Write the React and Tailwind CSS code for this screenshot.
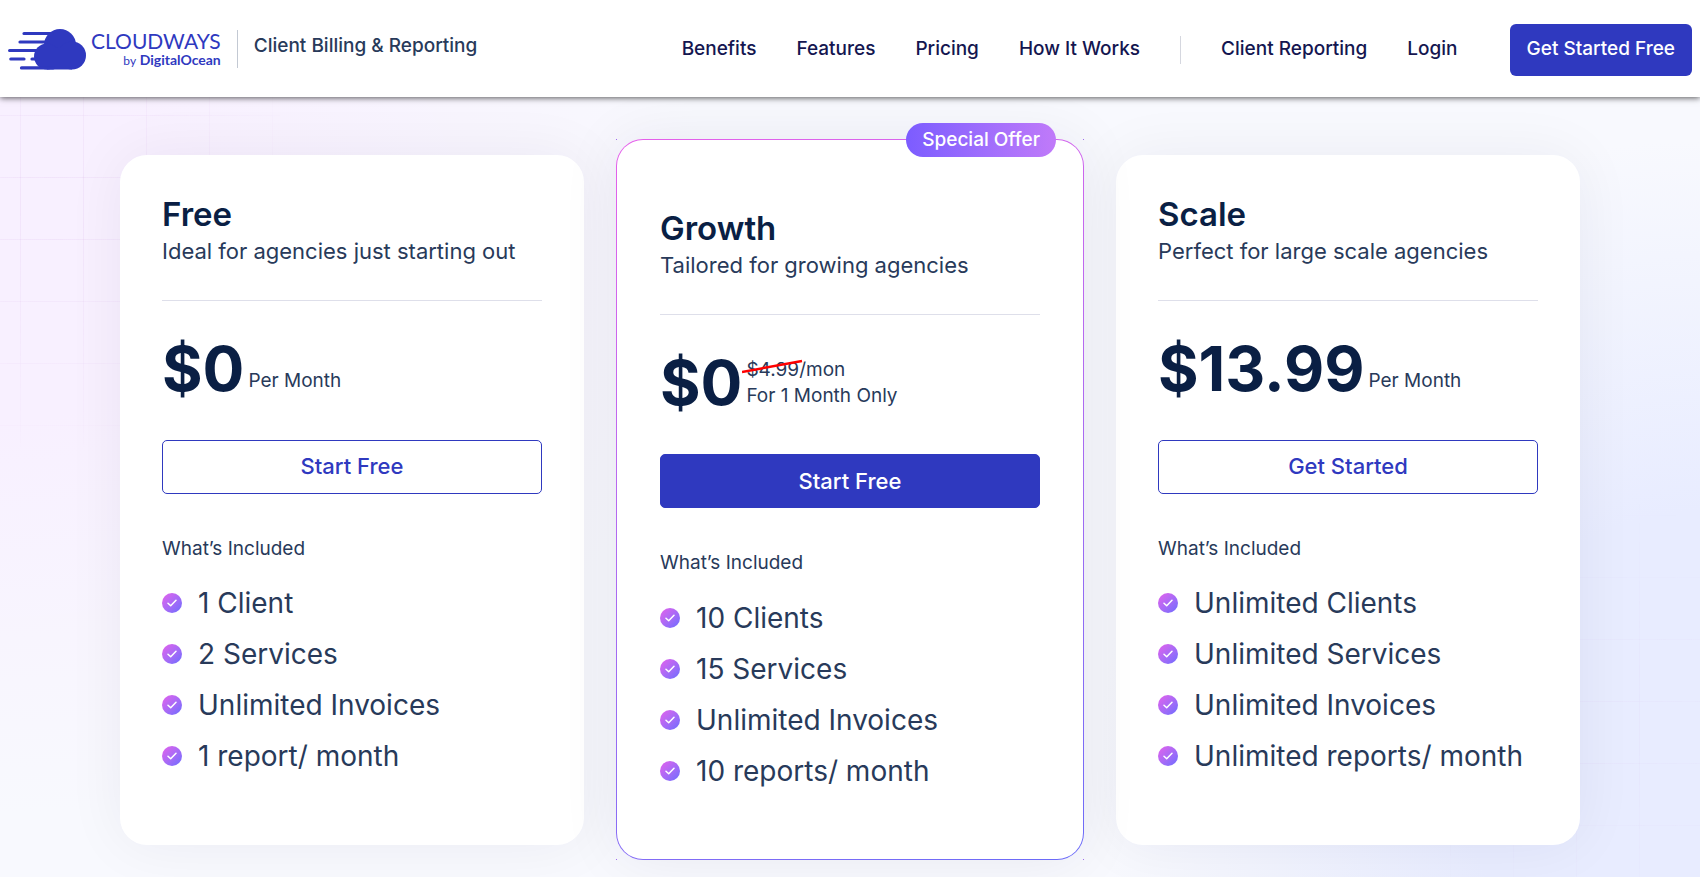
import React from "react";

const navLinks = ["Benefits", "Features", "Pricing", "How It Works"];
const accountLinks = ["Client Reporting", "Login"];

const plans = [
  {
    name: "Free",
    description: "Ideal for agencies just starting out",
    price: "$0",
    cta: "Start Free",
    features: ["1 Client", "2 Services", "Unlimited Invoices", "1 report/ month"]
  },
  {
    name: "Growth",
    description: "Tailored for growing agencies",
    price: "$0",
    oldPrice: "$4.99",
    cta: "Start Free",
    featured: true,
    features: ["10 Clients", "15 Services", "Unlimited Invoices", "10 reports/ month"]
  },
  {
    name: "Scale",
    description: "Perfect for large scale agencies",
    price: "$13.99",
    cta: "Get Started",
    features: ["Unlimited Clients", "Unlimited Services", "Unlimited Invoices", "Unlimited reports/ month"]
  }
];

function Logo() {
  return (
    <a href="#" className="flex items-center gap-1 text-[#2f39bf]">
      <svg width="79" height="42" viewBox="0 0 79 42" aria-hidden="true">
        <g fill="currentColor">
          <circle cx="52" cy="17" r="16" />
          <circle cx="64" cy="27.500" r="14" />
          <circle cx="39" cy="28.500" r="13" />
          <path d="M39 20H64V41.500H39Z" />
        </g>
        <g stroke="currentColor" strokeWidth="3.2" strokeLinecap="round">
          <path d="M16 5.500H44M12 14H38M1.600 22.500H30M2.800 31H16M24 31H30M13.500 39.900H45" />
        </g>
      </svg>
      <span className="flex flex-col items-end pt-1 font-['Lato',sans-serif]">
        <span className="text-[21px] leading-5">CLOUDWAYS</span>
        <span className="text-[14px] leading-[18px]">
          <span className="text-[12px]">by</span> <b>DigitalOcean</b>
        </span>
      </span>
    </a>
  );
}

function Header() {
  return (
    <header className="relative z-10 flex h-[97px] items-center justify-between bg-white px-2 shadow-[0_1px_6px_rgba(0,0,0,0.65)]">
      <div className="flex items-center">
        <Logo />
        <span className="ml-4 h-[38px] w-px bg-[#c3c9d3]" />
        <span className="ml-4 pb-1 text-[19px] font-medium text-[#283a5a]">Client Billing &amp; Reporting</span>
      </div>
      <nav className="flex items-center gap-10 pt-0.5 text-[19px] font-medium text-[#141650]">
        {navLinks.map((link) => (
          <a key={link} href="#">{link}</a>
        ))}
        <span className="h-7 w-px bg-[#d5d7df]" />
        {accountLinks.map((link) => (
          <a key={link} href="#">{link}</a>
        ))}
        <button className="ml-3 h-[52px] rounded-md bg-[#2f39bf] px-[17px] text-white">Get Started Free</button>
      </nav>
    </header>
  );
}

function CheckBadge() {
  return (
    <span className="flex size-5 shrink-0 items-center justify-center rounded-full bg-linear-135 from-[#e45fec] to-[#6a6bff]">
      <svg width="10" height="8" viewBox="0 0 10 8" fill="none" aria-hidden="true">
        <path d="M1 4.200L3.700 6.700L9 1.200" stroke="white" strokeWidth="1.5" strokeLinecap="round" strokeLinejoin="round" />
      </svg>
    </span>
  );
}

function PlanPrice({ plan }) {
  return (
    <div className="flex h-[74px] items-center gap-1">
      <span className="text-[62px] leading-[74px] font-bold text-[#0a1f44]">{plan.price}</span>
      {plan.oldPrice ? (
        <p className="text-[19px] leading-[26px]">
          <span className="relative">
            {plan.oldPrice}
            <svg className="absolute top-0 -left-1" width="62" height="16" viewBox="0 0 62 16" aria-hidden="true">
              <path d="M0 14L60 3" stroke="#ff0000" strokeWidth="2.500" />
            </svg>
          </span>
          /mon
          <br />
          For 1 Month Only
        </p>
      ) : (
        <span className="pt-6 text-[19px] leading-[26px]">Per Month</span>
      )}
    </div>
  );
}

function PlanBody({ plan }) {
  return (
    <>
      <h2 className="text-[33px] leading-[38px] font-semibold text-[#0a1f44]">{plan.name}</h2>
      <p className="mb-[31px] text-[22px] leading-9">{plan.description}</p>
      <hr className="mb-[31px] border-[#dedfea]" />
      <PlanPrice plan={plan} />
      <button
        className={`mt-[34px] h-[54px] w-full rounded-[5px] border border-[#2f39bf] text-[22px] font-medium ${
          plan.featured ? "bg-[#2f39bf] text-white" : "bg-white text-[#2f39bf]"
        }`}
      >
        {plan.cta}
      </button>
      <p className="mt-[41px] mb-[15px] text-[19px] leading-7">What’s Included</p>
      <ul>
        {plan.features.map((feature) => (
          <li key={feature} className="flex h-[51px] items-center gap-4 text-[28px] whitespace-nowrap">
            <CheckBadge />
            {feature}
          </li>
        ))}
      </ul>
    </>
  );
}

function FeaturedCard({ plan }) {
  return (
    <article className="relative -mx-0.5 rounded-[27px] bg-linear-160 from-[#e65fea] to-[#6a6bf8] p-px shadow-[0_0_60px_rgba(20,20,50,0.07)]">
      <span className="absolute top-0 left-0 size-px bg-[#a06cf0]" />
      <span className="absolute top-0 right-0 size-px bg-[#a06cf0]" />
      <span className="absolute bottom-0 left-0 size-px bg-[#a06cf0]" />
      <span className="absolute right-0 bottom-0 size-px bg-[#a06cf0]" />
      <span className="absolute -top-4 right-7 rounded-full bg-linear-to-r from-[#7c5cff] to-[#c07af9] px-4 text-[19px] leading-[34px] font-medium text-white">
        Special Offer
      </span>
      <div className="rounded-[26px] bg-white px-[43px] pt-[69px] pb-[63px]">
        <PlanBody plan={plan} />
      </div>
    </article>
  );
}

function PlanCard({ plan }) {
  return (
    <article className="rounded-[27px] bg-white px-[42px] pt-10 pb-[63px] shadow-[0_0_60px_rgba(20,20,50,0.06)]">
      <PlanBody plan={plan} />
    </article>
  );
}

// faint square grid that fades out towards the middle of the page
const gridLines =
  "absolute bg-[linear-gradient(to_right,rgba(190,120,210,0.10)_1px,transparent_1px),linear-gradient(to_bottom,rgba(190,120,210,0.10)_1px,transparent_1px)] bg-[length:63px_62px]";

export default function App() {
  return (
    <div className="flex min-h-screen flex-col overflow-hidden bg-[#f8f9fe] font-['Inter',sans-serif] text-[#283a5a]">
      <Header />
      <main className="relative grow bg-[radial-gradient(ellipse_720px_560px_at_0%_20%,#f8f0ff_30%,transparent),radial-gradient(ellipse_600px_620px_at_100%_85%,#e8ecff_40%,transparent)] pt-[42px] pb-4">
        <div className={`${gridLines} top-0 left-0 h-[350px] w-[280px] bg-position-[20px_18px] mask-[radial-gradient(circle_at_20%_30%,black,transparent_85%)]`} />
        <div className={`${gridLines} right-0 bottom-0 h-[380px] w-[280px] bg-position-[30px_18px] opacity-50 mask-[radial-gradient(circle_at_60%_60%,black,transparent_85%)]`} />
        <div className="relative mx-auto grid max-w-[1460px] grid-cols-3 items-center gap-[34px]">
          {plans.map((plan) =>
            plan.featured ? <FeaturedCard key={plan.name} plan={plan} /> : <PlanCard key={plan.name} plan={plan} />
          )}
        </div>
      </main>
    </div>
  );
}
